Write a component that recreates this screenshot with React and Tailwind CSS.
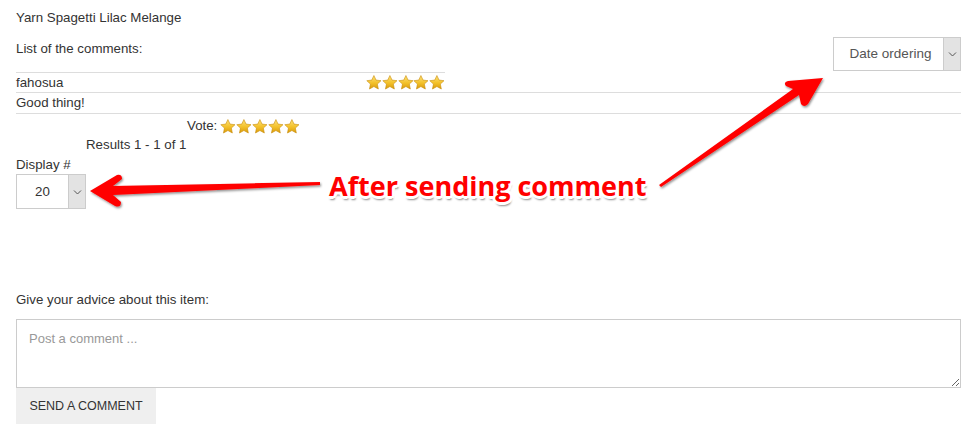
import React from 'react'

function Star() {
  return (
    <svg width="15.8" height="15" viewBox="0 0 24 23" className="shrink-0">
      <defs>
        <linearGradient id="sg" x1="0" y1="0" x2="0" y2="1">
          <stop offset="0" stopColor="#fde27a" />
          <stop offset="0.55" stopColor="#f3c12a" />
          <stop offset="1" stopColor="#d99a0b" />
        </linearGradient>
      </defs>
      <path
        d="M12 0.8l3.3 7 7.6 0.9-5.6 5.2 1.5 7.6L12 17.7l-6.8 3.8 1.5-7.6L1.1 8.7l7.6-0.9z"
        fill="url(#sg)"
        stroke="#c98d0a"
        strokeWidth="0.9"
        strokeLinejoin="round"
      />
    </svg>
  )
}

function Stars() {
  return (
    <div className="flex">
      {[0, 1, 2, 3, 4].map(i => <Star key={i} />)}
    </div>
  )
}

function Chevron() {
  return (
    <svg width="9" height="6" viewBox="0 0 9 6">
      <path d="M1 1.5l3.5 3.5 3.5-3.5" fill="none" stroke="#555" strokeWidth="1" />
    </svg>
  )
}

function Arrows() {
  return (
    <svg className="absolute left-0 top-0 pointer-events-none" width="974" height="442" viewBox="0 0 974 442">
      <defs>
        <filter id="ash" x="-10%" y="-10%" width="120%" height="130%">
          <feDropShadow dx="1" dy="1.5" stdDeviation="1" floodColor="#000" floodOpacity="0.45" />
        </filter>
      </defs>
      <g fill="#ff0000" filter="url(#ash)">
        <path d="M90 191 L117 175 Q122 174 122 179 L113 186 L320 182 L320 185 L113 195 L121 202 Q121 208 115 206 Z" />
        <path d="M823 78 L808 104 Q804 108 801 104 L799 95 L661 187 L659 185 L793 89 L786 86 Q783 82 788 81 Z" />
      </g>
    </svg>
  )
}

export default function App() {
  return (
    <div className="relative w-[974px] h-[442px] bg-white overflow-hidden font-['Liberation_Sans',sans-serif] text-[13.3px] text-[#333]">
      <div className="px-4 pt-[10px]">
        <div className="leading-[16px]">Yarn Spagetti Lilac Melange</div>

        <div className="flex justify-between items-start mt-[15px] mr-[-3px]">
          <div className="leading-[16px]">List of the comments:</div>
          <div className="flex h-[34px] w-[128px] border border-[#ccc] mt-[-4px]">
            <div className="flex-1 flex items-center justify-center text-[#555] text-[13.5px] pl-1">Date ordering</div>
            <div className="w-[17px] bg-[#e3e3e3] border-l border-[#ccc] flex items-center justify-center">
              <Chevron />
            </div>
          </div>
        </div>

        <div className="mt-[1px] mr-[-3px]">
          <div className="flex w-[429px] h-[20px] border-t border-[#ddd]">
            <div className="w-[350px] flex items-center">fahosua</div>
            <div className="flex items-center">
              <Stars />
            </div>
          </div>
          <div className="h-[21px] border-t border-[#ddd] flex items-center">Good thing!</div>
          <div className="border-t border-[#ddd]" />
        </div>

        <div className="flex items-center h-[24px] pl-[171px]">
          <span className="mr-[3px]">Vote:</span>
          <Stars />
        </div>
        <div className="pl-[70px] leading-[16px] mt-[-1px]">Results 1 - 1 of 1</div>

        <div className="leading-[16px] mt-[4px]">Display #</div>
        <div className="flex h-[35px] w-[70px] border border-[#ccc] mt-[1px]">
          <div className="flex-1 flex items-center justify-center text-[13.3px]">20</div>
          <div className="w-[17px] bg-[#e3e3e3] border-l border-[#ccc] flex items-center justify-center">
            <Chevron />
          </div>
        </div>

        <div className="leading-[16px] mt-[83px]">Give your advice about this item:</div>
        <textarea
          className="block mt-[11px] w-[945px] h-[69px] border border-[#ccc] px-3 py-[9px] text-[13px] placeholder:text-[#999] outline-none resize"
          placeholder="Post a comment ..."
        />
        <button className="block h-[36px] w-[140px] bg-[#efefef] text-[#333] text-[12.5px] uppercase">Send a comment</button>
      </div>

      <Arrows />
      <div className="absolute left-[329px] top-[169px] font-['Open_Sans',sans-serif] font-bold text-[27px] leading-[34px] text-[#ff0000] [text-shadow:-2px_-2px_0_#fff,2px_-2px_0_#fff,-2px_2px_0_#fff,2px_2px_0_#fff,0_3px_0_#fff,3px_0_0_#fff,-3px_0_0_#fff,0_-3px_0_#fff,1px_4px_2px_rgba(0,0,0,0.45)]">
        After sending comment
      </div>
    </div>
  )
}
